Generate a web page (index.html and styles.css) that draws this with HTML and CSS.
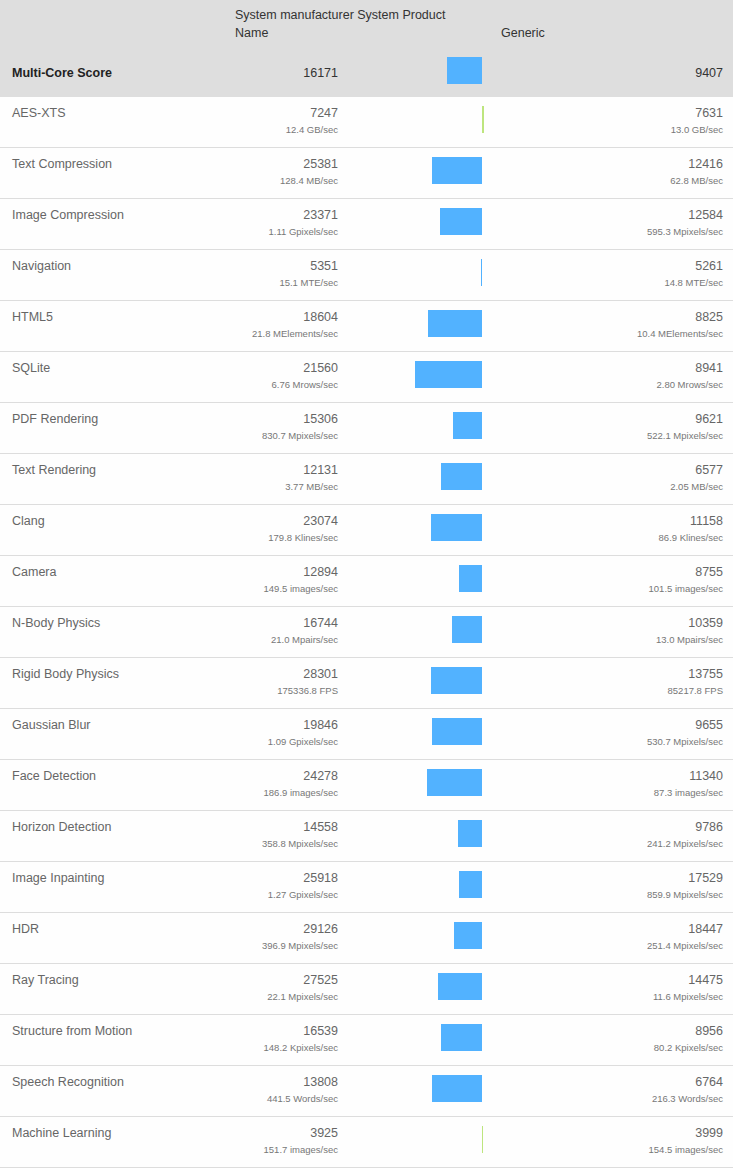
FILE: index.html
```html
<!DOCTYPE html>
<html lang="en">
<head>
<meta charset="utf-8">
<title>Multi-Core Benchmark Comparison</title>
<link rel="stylesheet" href="styles.css">
</head>
<body>
<div class="table">
  <div class="head">
    <div class="titles">
      <div class="cell-name"></div>
      <div class="title-a">System manufacturer System Product Name</div>
      <div class="title-b">Generic</div>
    </div>
    <div class="total">
      <div class="cell-name total-name">Multi-Core Score</div>
      <div class="cell-score"><div class="num">16171</div></div>
      <div class="cell-bar"><div class="bar-left"><div class="bar up" style="width:34.9px"></div></div><div class="bar-right"></div></div>
      <div class="cell-score"><div class="num">9407</div></div>
    </div>
  </div>

  <div class="row">
    <div class="cell-name">AES-XTS</div>
    <div class="cell-score"><div class="num">7247</div><div class="unit">12.4 GB/sec</div></div>
    <div class="cell-bar"><div class="bar-left"></div><div class="bar-right"><div class="bar down" style="width:2.4px"></div></div></div>
    <div class="cell-score"><div class="num">7631</div><div class="unit">13.0 GB/sec</div></div>
  </div>
  <div class="row">
    <div class="cell-name">Text Compression</div>
    <div class="cell-score"><div class="num">25381</div><div class="unit">128.4 MB/sec</div></div>
    <div class="cell-bar"><div class="bar-left"><div class="bar up" style="width:50.5px"></div></div><div class="bar-right"></div></div>
    <div class="cell-score"><div class="num">12416</div><div class="unit">62.8 MB/sec</div></div>
  </div>
  <div class="row">
    <div class="cell-name">Image Compression</div>
    <div class="cell-score"><div class="num">23371</div><div class="unit">1.11 Gpixels/sec</div></div>
    <div class="cell-bar"><div class="bar-left"><div class="bar up" style="width:41.7px"></div></div><div class="bar-right"></div></div>
    <div class="cell-score"><div class="num">12584</div><div class="unit">595.3 Mpixels/sec</div></div>
  </div>
  <div class="row">
    <div class="cell-name">Navigation</div>
    <div class="cell-score"><div class="num">5351</div><div class="unit">15.1 MTE/sec</div></div>
    <div class="cell-bar"><div class="bar-left"><div class="bar up" style="width:1px"></div></div><div class="bar-right"></div></div>
    <div class="cell-score"><div class="num">5261</div><div class="unit">14.8 MTE/sec</div></div>
  </div>
  <div class="row">
    <div class="cell-name">HTML5</div>
    <div class="cell-score"><div class="num">18604</div><div class="unit">21.8 MElements/sec</div></div>
    <div class="cell-bar"><div class="bar-left"><div class="bar up" style="width:53.9px"></div></div><div class="bar-right"></div></div>
    <div class="cell-score"><div class="num">8825</div><div class="unit">10.4 MElements/sec</div></div>
  </div>
  <div class="row">
    <div class="cell-name">SQLite</div>
    <div class="cell-score"><div class="num">21560</div><div class="unit">6.76 Mrows/sec</div></div>
    <div class="cell-bar"><div class="bar-left"><div class="bar up" style="width:67.5px"></div></div><div class="bar-right"></div></div>
    <div class="cell-score"><div class="num">8941</div><div class="unit">2.80 Mrows/sec</div></div>
  </div>
  <div class="row">
    <div class="cell-name">PDF Rendering</div>
    <div class="cell-score"><div class="num">15306</div><div class="unit">830.7 Mpixels/sec</div></div>
    <div class="cell-bar"><div class="bar-left"><div class="bar up" style="width:28.7px"></div></div><div class="bar-right"></div></div>
    <div class="cell-score"><div class="num">9621</div><div class="unit">522.1 Mpixels/sec</div></div>
  </div>
  <div class="row">
    <div class="cell-name">Text Rendering</div>
    <div class="cell-score"><div class="num">12131</div><div class="unit">3.77 MB/sec</div></div>
    <div class="cell-bar"><div class="bar-left"><div class="bar up" style="width:41px"></div></div><div class="bar-right"></div></div>
    <div class="cell-score"><div class="num">6577</div><div class="unit">2.05 MB/sec</div></div>
  </div>
  <div class="row">
    <div class="cell-name">Clang</div>
    <div class="cell-score"><div class="num">23074</div><div class="unit">179.8 Klines/sec</div></div>
    <div class="cell-bar"><div class="bar-left"><div class="bar up" style="width:51.4px"></div></div><div class="bar-right"></div></div>
    <div class="cell-score"><div class="num">11158</div><div class="unit">86.9 Klines/sec</div></div>
  </div>
  <div class="row">
    <div class="cell-name">Camera</div>
    <div class="cell-score"><div class="num">12894</div><div class="unit">149.5 images/sec</div></div>
    <div class="cell-bar"><div class="bar-left"><div class="bar up" style="width:23px"></div></div><div class="bar-right"></div></div>
    <div class="cell-score"><div class="num">8755</div><div class="unit">101.5 images/sec</div></div>
  </div>
  <div class="row">
    <div class="cell-name">N-Body Physics</div>
    <div class="cell-score"><div class="num">16744</div><div class="unit">21.0 Mpairs/sec</div></div>
    <div class="cell-bar"><div class="bar-left"><div class="bar up" style="width:29.9px"></div></div><div class="bar-right"></div></div>
    <div class="cell-score"><div class="num">10359</div><div class="unit">13.0 Mpairs/sec</div></div>
  </div>
  <div class="row">
    <div class="cell-name">Rigid Body Physics</div>
    <div class="cell-score"><div class="num">28301</div><div class="unit">175336.8 FPS</div></div>
    <div class="cell-bar"><div class="bar-left"><div class="bar up" style="width:51.2px"></div></div><div class="bar-right"></div></div>
    <div class="cell-score"><div class="num">13755</div><div class="unit">85217.8 FPS</div></div>
  </div>
  <div class="row">
    <div class="cell-name">Gaussian Blur</div>
    <div class="cell-score"><div class="num">19846</div><div class="unit">1.09 Gpixels/sec</div></div>
    <div class="cell-bar"><div class="bar-left"><div class="bar up" style="width:50.5px"></div></div><div class="bar-right"></div></div>
    <div class="cell-score"><div class="num">9655</div><div class="unit">530.7 Mpixels/sec</div></div>
  </div>
  <div class="row">
    <div class="cell-name">Face Detection</div>
    <div class="cell-score"><div class="num">24278</div><div class="unit">186.9 images/sec</div></div>
    <div class="cell-bar"><div class="bar-left"><div class="bar up" style="width:55px"></div></div><div class="bar-right"></div></div>
    <div class="cell-score"><div class="num">11340</div><div class="unit">87.3 images/sec</div></div>
  </div>
  <div class="row">
    <div class="cell-name">Horizon Detection</div>
    <div class="cell-score"><div class="num">14558</div><div class="unit">358.8 Mpixels/sec</div></div>
    <div class="cell-bar"><div class="bar-left"><div class="bar up" style="width:23.7px"></div></div><div class="bar-right"></div></div>
    <div class="cell-score"><div class="num">9786</div><div class="unit">241.2 Mpixels/sec</div></div>
  </div>
  <div class="row">
    <div class="cell-name">Image Inpainting</div>
    <div class="cell-score"><div class="num">25918</div><div class="unit">1.27 Gpixels/sec</div></div>
    <div class="cell-bar"><div class="bar-left"><div class="bar up" style="width:23.3px"></div></div><div class="bar-right"></div></div>
    <div class="cell-score"><div class="num">17529</div><div class="unit">859.9 Mpixels/sec</div></div>
  </div>
  <div class="row">
    <div class="cell-name">HDR</div>
    <div class="cell-score"><div class="num">29126</div><div class="unit">396.9 Mpixels/sec</div></div>
    <div class="cell-bar"><div class="bar-left"><div class="bar up" style="width:28.1px"></div></div><div class="bar-right"></div></div>
    <div class="cell-score"><div class="num">18447</div><div class="unit">251.4 Mpixels/sec</div></div>
  </div>
  <div class="row">
    <div class="cell-name">Ray Tracing</div>
    <div class="cell-score"><div class="num">27525</div><div class="unit">22.1 Mpixels/sec</div></div>
    <div class="cell-bar"><div class="bar-left"><div class="bar up" style="width:43.8px"></div></div><div class="bar-right"></div></div>
    <div class="cell-score"><div class="num">14475</div><div class="unit">11.6 Mpixels/sec</div></div>
  </div>
  <div class="row">
    <div class="cell-name">Structure from Motion</div>
    <div class="cell-score"><div class="num">16539</div><div class="unit">148.2 Kpixels/sec</div></div>
    <div class="cell-bar"><div class="bar-left"><div class="bar up" style="width:41.1px"></div></div><div class="bar-right"></div></div>
    <div class="cell-score"><div class="num">8956</div><div class="unit">80.2 Kpixels/sec</div></div>
  </div>
  <div class="row">
    <div class="cell-name">Speech Recognition</div>
    <div class="cell-score"><div class="num">13808</div><div class="unit">441.5 Words/sec</div></div>
    <div class="cell-bar"><div class="bar-left"><div class="bar up" style="width:50.2px"></div></div><div class="bar-right"></div></div>
    <div class="cell-score"><div class="num">6764</div><div class="unit">216.3 Words/sec</div></div>
  </div>
  <div class="row">
    <div class="cell-name">Machine Learning</div>
    <div class="cell-score"><div class="num">3925</div><div class="unit">151.7 images/sec</div></div>
    <div class="cell-bar"><div class="bar-left"></div><div class="bar-right"><div class="bar down" style="width:1px"></div></div></div>
    <div class="cell-score"><div class="num">3999</div><div class="unit">154.5 images/sec</div></div>
  </div>
</div>
</body>
</html>
```

FILE: styles.css
```css
html, body {
  margin: 0;
  padding: 0;
  background: #ffffff;
}

body {
  font-family: "Liberation Sans", Arial, sans-serif;
  font-size: 12.5px;
  color: #666666;
}

.table {
  width: 733px;
}

.head {
  background: #dedede;
  height: 97px;
  color: #333333;
}

.titles {
  display: grid;
  grid-template-columns: 225px 266px 1fr;
  height: 48px;
  box-sizing: border-box;
  padding-top: 6px;
  line-height: 18px;
}

.title-a {
  padding: 0 10px;
}

.title-b {
  align-self: end;
  padding: 0 10px 6px;
}

.total,
.row {
  display: grid;
  grid-template-columns: 225px 123px 143px 1fr;
}

.total {
  height: 49px;
}

.total .cell-name,
.total .cell-score {
  padding-top: 17px;
}

.total-name {
  font-weight: bold;
  color: #222222;
}

.row {
  height: 50px;
  border-bottom: 1px solid #dddddd;
  background: #fefefe;
}

.cell-name {
  padding: 8px 0 0 12px;
  line-height: 16px;
}

.cell-score {
  padding: 8px 10px 0 0;
  text-align: right;
}

.num {
  line-height: 16px;
}

.unit {
  font-size: 9.5px;
  line-height: 12px;
  margin-top: 3px;
  color: #777777;
}

.cell-bar {
  display: flex;
  padding-top: 9px;
}

.bar-left {
  flex: 1;
  display: flex;
  justify-content: flex-end;
}

.bar-right {
  width: 9px;
  display: flex;
}

.bar {
  height: 27px;
}

.bar.up {
  background: #52b2ff;
}

.bar.down {
  background: #bde57e;
}
```
